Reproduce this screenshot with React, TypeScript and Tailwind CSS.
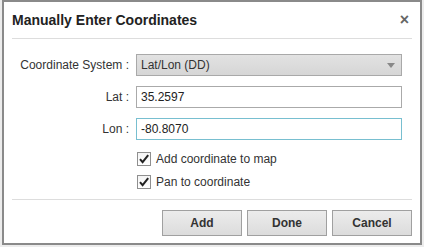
import React from 'react'

const font = { fontFamily: '"Liberation Sans", Arial, sans-serif' }

function Check({ label }: { label: string }) {
  return (
    <div className="flex items-center h-[23px] gap-[5px]">
      <span className="w-[14px] h-[14px] border border-[#8f8f8f] bg-gradient-to-b from-[#f4f4f4] to-[#ffffff] flex items-center justify-center">
        <svg width="12" height="12" viewBox="0 0 12 12">
          <path d="M2 6.2 L4.6 9.2 L10.2 2.2" fill="none" stroke="#222" strokeWidth="2" />
        </svg>
      </span>
      <span className="text-[12px] text-[#333]">{label}</span>
    </div>
  )
}

function Row({ label, children }: { label: string; children: React.ReactNode }) {
  return (
    <div className="flex items-center">
      <div className="w-[124px] shrink-0 whitespace-nowrap text-right pr-[7px] text-[12px] text-[#333]">{label}</div>
      {children}
    </div>
  )
}

export default function App() {
  return (
    <div className="w-[424px] h-[247px] bg-[#ececec] pl-[2px]" style={font}>
      <div className="w-[420px] h-[245px] bg-white border-2 border-[#8a8a8a] flex flex-col px-[8px]">
        {/* title */}
        <div className="flex items-center justify-between h-[37px] border-b border-[#dddddd]">
          <span className="text-[14px] font-bold text-[#222] pt-[1px]">Manually Enter Coordinates</span>
          <span className="text-[16px] font-bold text-[#666] pr-[3px] leading-none">×</span>
        </div>

        <div className="flex flex-col pt-[15px] gap-[10px]">
          <Row label="Coordinate System :">
            <div className="w-[266px] h-[22px] border border-[#a9a9a9] bg-gradient-to-b from-[#e2e2e2] to-[#d6d6d6] flex items-center justify-between px-[4px]">
              <span className="text-[12px] text-[#333]">Lat/Lon (DD)</span>
              <svg width="8" height="5" viewBox="0 0 8 5" className="mr-[2px]">
                <path d="M0 0 H8 L4 5 Z" fill="#888" />
              </svg>
            </div>
          </Row>
          <Row label="Lat :">
            <div className="w-[266px] h-[22px] border border-[#aaaaaa] bg-white flex items-center px-[4px] text-[12px] text-[#222]">
              35.2597
            </div>
          </Row>
          <Row label="Lon :">
            <div className="w-[266px] h-[22px] border border-[#78bfd0] bg-white flex items-center px-[4px] text-[12px] text-[#222]">
              -80.8070
            </div>
          </Row>
        </div>

        <div className="flex flex-col pl-[125px] pt-[7px]">
          <Check label="Add coordinate to map" />
          <Check label="Pan to coordinate" />
        </div>

        <div className="border-t border-[#dddddd] mt-[6px] flex justify-end gap-[5px] pt-[10px]">
          {['Add', 'Done', 'Cancel'].map(b => (
            <button
              key={b}
              className="w-[80px] h-[26px] border border-[#a0a0a0] bg-gradient-to-b from-[#ececec] to-[#dcdcdc] text-[12px] font-bold text-[#333]"
            >
              {b}
            </button>
          ))}
        </div>
      </div>
    </div>
  )
}
